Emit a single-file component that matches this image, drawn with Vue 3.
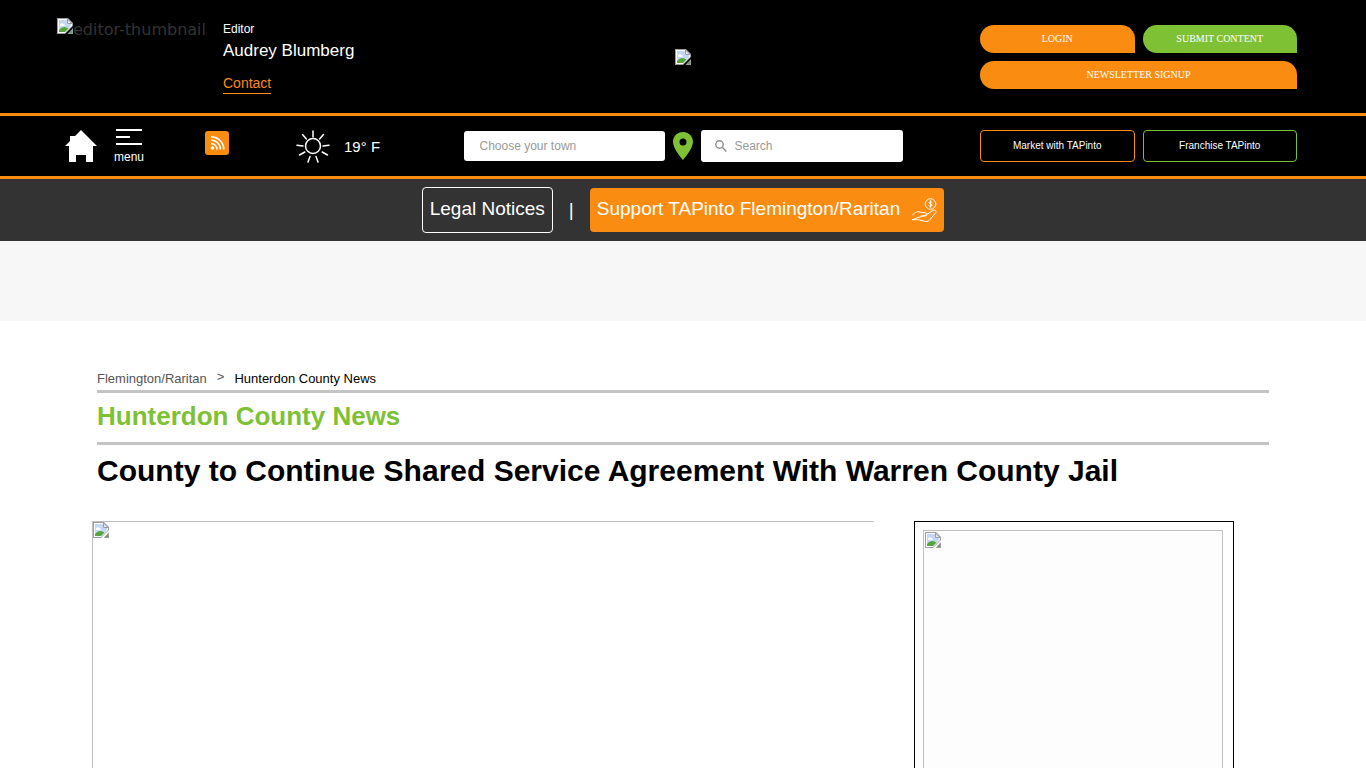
<template>
  <div class="page">
    <header>
      <div class="top-bar">
        <div class="editor">
          <div class="editor-thumb">
            <BrokenImage />
            <span>editor-thumbnail</span>
          </div>
          <div class="editor-info">
            <span class="editor-role">Editor</span>
            <span class="editor-name">Audrey Blumberg</span>
            <a href="#" class="editor-contact">Contact</a>
          </div>
        </div>
        <a href="#" class="logo" aria-label="Home page"><BrokenImage /></a>
        <div class="account-buttons">
          <button type="button" class="pill">LOGIN</button>
          <button type="button" class="pill pill-green">SUBMIT CONTENT</button>
          <button type="button" class="pill pill-wide">NEWSLETTER SIGNUP</button>
        </div>
      </div>

      <nav class="nav-bar">
        <div class="nav-left">
          <a href="#" class="home" aria-label="Home">
            <svg width="32" height="34" viewBox="0 0 32 34" fill="#fff">
              <path d="M16 1L21 6L32 17H28V33H21V26H11V33H4V17H0L5 12V7H10Z" />
            </svg>
          </a>
          <button type="button" class="menu">
            <svg width="26" height="18" viewBox="0 0 26 18" stroke="#fff" stroke-width="2">
              <path d="M0 2H26M0 9H14M0 16H26" />
            </svg>
            <span>menu</span>
          </button>
          <a href="#" class="rss" aria-label="RSS feed">
            <svg width="24" height="24" viewBox="0 0 24 24" fill="none">
              <rect width="24" height="24" rx="3" fill="#fa8c11" />
              <circle cx="7.5" cy="17" r="1.8" fill="#fff" />
              <path d="M6 12.500A6 6 0 0 1 12 18.500M6 9A9.500 9.500 0 0 1 15.500 18.500M6 5.700A12.800 12.800 0 0 1 18.800 18.500" stroke="#fff" stroke-width="1.600" />
            </svg>
          </a>
          <div class="weather">
            <svg width="34" height="34" viewBox="0 0 34 34" fill="none" stroke="#fff" stroke-width="1.500" stroke-linecap="round">
              <circle cx="17" cy="17" r="7.500" />
              <path d="M17 2V8M27.500 5.500L23.600 10M33 16.300L27 17M31.500 26L26.200 23M22 33L20 27.400M12 33L14 27.400M3.500 26L8.800 23M1 16.300L7 17M6.500 5.500L10.400 10" />
            </svg>
            <span>19° F</span>
          </div>
        </div>

        <form class="search" @submit.prevent>
          <input v-model="town" class="town-input" type="text" placeholder="Choose your town" aria-label="Choose your town" />
          <svg class="pin" width="20" height="28" viewBox="0 0 20 28" fill="#7fc135">
            <path fill-rule="evenodd" d="M10 0C4.400 0 0 4.400 0 9.800C0 17 10 28 10 28S20 17 20 9.800C20 4.400 15.600 0 10 0ZM10 6.400A3.500 3.500 0 1 1 10 13.400A3.500 3.500 0 0 1 10 6.400Z" />
          </svg>
          <label class="search-box">
            <svg width="12" height="12" viewBox="0 0 12 12" fill="none" stroke="#8d8d8d" stroke-width="1.400">
              <circle cx="4.500" cy="4.500" r="3.700" />
              <path d="M7.300 7.300L11.400 11.400" />
            </svg>
            <input v-model="query" type="text" placeholder="Search" aria-label="Search" />
          </label>
        </form>

        <div class="nav-right">
          <a href="#" class="outline">Market with TAPinto</a>
          <a href="#" class="outline outline-green">Franchise TAPinto</a>
        </div>
      </nav>

      <div class="link-bar">
        <a href="#" class="legal">Legal Notices</a>
        <span class="divider">|</span>
        <a href="#" class="support">
          <span>Support TAPinto Flemington/Raritan</span>
          <svg width="25" height="25" viewBox="0 0 25 25" fill="none" stroke="#fff" stroke-linecap="round" stroke-linejoin="round">
            <circle cx="18.500" cy="6" r="5.300" />
            <path d="M20.200 4.500C19.700 3.500 17 3.500 16.900 4.700C16.900 6.200 20.200 5.600 20.200 7.300C20.100 8.700 17.200 8.500 16.700 7.600M18.500 2.700V9.300" />
            <path d="M0.500 17C3 14 5.500 13.300 8 14C9.500 14.600 11 14.700 13 14.700C15.500 14.700 15.500 18 13 18H9M14.800 16.500L20.800 12.500C22.800 11.300 25 13 23.500 15L18 21.500C17 22.800 15.500 23.800 13.500 23.500L7.500 22C6 21.700 5.500 21.700 4.500 21.700H0.500Z" />
          </svg>
        </a>
      </div>
    </header>

    <div class="ad-strip"></div>

    <main>
      <nav class="breadcrumb" aria-label="Breadcrumb">
        <a href="#">Flemington/Raritan</a>
        <span class="arrow">&gt;</span>
        <a href="#" class="current">Hunterdon County News</a>
      </nav>
      <h2>Hunterdon County News</h2>
      <h1>County to Continue Shared Service Agreement With Warren County Jail</h1>
      <div class="columns">
        <div class="photo"><BrokenImage /></div>
        <aside class="sidebar">
          <div class="ad"><BrokenImage /></div>
        </aside>
      </div>
    </main>
  </div>
</template>

<script setup>
import { h, ref } from 'vue'

const town = ref('')
const query = ref('')

// Placeholder glyph for pictures that are not available
const BrokenImage = () =>
  h('svg', { width: 16, height: 16, viewBox: '0 0 16 16', 'aria-hidden': 'true' }, [
    h('path', { d: 'M0 0H11L16 5V8L8 16H0Z', fill: '#9b9da3' }),
    h('path', { d: 'M1 1H10.500L15 5.500V8L8 15H1Z', fill: '#fff' }),
    h('path', { d: 'M2 2H10V6H14V8L8 14H2Z', fill: '#c4d7f5' }),
    h('path', { d: 'M3 7C3 5 6 4.500 6.500 6C8 6 8 8 7 8H3Z', fill: '#fff' }),
    h('path', { d: 'M2 14V12C5 8.500 8 8 11.500 10.500L8 14Z', fill: '#55a63a' }),
    h('path', { d: 'M10.500 1V5.500H15Z', fill: '#e9ebf2', stroke: '#9b9da3' }),
    h('path', { d: 'M16 10V16H10.500Z', fill: '#9b9da3' }),
    h('path', { d: 'M15 12.500V15H12.500Z', fill: '#55a63a' })
  ])
</script>

<style>
body {
  margin: 0;
  background: #fff;
}
</style>

<style scoped>
.page {
  font-family: "Liberation Sans", Arial, sans-serif;
  color: #000;
}

a {
  color: inherit;
  text-decoration: none;
}

svg {
  display: block;
  flex: none;
}

button,
input {
  font-family: inherit;
  border: 0;
  padding: 0;
  box-sizing: border-box;
}

button {
  cursor: pointer;
}

.top-bar,
.nav-bar {
  display: grid;
  grid-template-columns: 1fr auto 1fr;
  padding: 0 57px;
  background: #000;
  color: #fff;
  border-bottom: 3px solid #fa8c11;
}

.top-bar {
  height: 113px;
}

.editor {
  display: flex;
  gap: 16px;
  padding-top: 18px;
}

.editor-thumb {
  display: flex;
  width: 150px;
  color: #333;
  font-family: "DejaVu Sans", sans-serif;
  font-size: 16px;
  line-height: 24px;
}

.editor-info {
  display: flex;
  flex-direction: column;
  align-items: flex-start;
}

.editor-role {
  font-size: 12px;
  line-height: 22px;
}

.editor-name {
  font-size: 17px;
  line-height: 22px;
}

.editor-contact {
  margin-top: 12px;
  color: #fa8c11;
  font-size: 14px;
  line-height: 19px;
  border-bottom: 1px solid #fa8c11;
}

.logo {
  align-self: center;
}

.account-buttons,
.nav-right {
  justify-self: end;
  display: grid;
  grid-template-columns: 1fr 1fr;
  gap: 8px;
  width: 317px;
  margin-right: 12px;
  align-content: center;
}

.pill {
  height: 28px;
  color: #fff;
  background: #fa8c11;
  font-family: "Liberation Serif", serif;
  font-size: 10px;
  border-radius: 14px 14px 0 14px;
}

.pill-green {
  background: #7fc135;
}

.pill-wide {
  grid-column: span 2;
}

.nav-bar {
  height: 60px;
  align-items: center;
}

.nav-left {
  display: flex;
  align-items: center;
  padding-left: 8px;
}

.menu {
  display: flex;
  flex-direction: column;
  align-items: center;
  gap: 4px;
  margin-left: 17px;
  background: none;
  color: #fff;
  font-size: 12px;
  line-height: 14px;
}

.rss {
  margin: 0 67px 6px 61px;
}

.weather {
  display: flex;
  align-items: center;
  gap: 14px;
  font-size: 15px;
}

.search {
  display: flex;
  align-items: center;
  gap: 8px;
}

.search input {
  color: #333;
  font-size: 12px;
  background: #fff;
}

.search input::placeholder {
  color: #999;
  opacity: 1;
}

.town-input {
  width: 201px;
  height: 30px;
  padding-left: 16px;
  border-radius: 3px;
}

.search-box {
  display: flex;
  align-items: center;
  gap: 8px;
  box-sizing: border-box;
  width: 202px;
  height: 32px;
  padding: 0 14px;
  background: #fff;
  border-radius: 3px;
}

.search-box input {
  flex: 1;
  min-width: 0;
}

.outline {
  padding: 0 8px;
  border: 1px solid #fa8c11;
  border-radius: 4px;
  font-size: 10px;
  line-height: 30px;
  text-align: center;
}

.outline-green {
  border-color: #7fc135;
}

.link-bar {
  display: flex;
  justify-content: center;
  align-items: center;
  height: 62px;
  background: #333;
  color: #fff;
  font-size: 19px;
}

.legal {
  padding: 0 7px 2px;
  border: 1px solid #fff;
  border-radius: 4px;
  line-height: 42px;
}

.divider {
  margin: 0 16px;
}

.support {
  display: flex;
  align-items: center;
  gap: 12px;
  padding: 0 7px;
  background: #fa8c11;
  border-radius: 4px;
}

.support span {
  padding-bottom: 2px;
  line-height: 42px;
}

.ad-strip {
  height: 80px;
  background: #f7f7f7;
}

main {
  padding: 49px 97px 0;
}

.breadcrumb {
  display: flex;
  gap: 10px;
  font-size: 13px;
  line-height: 17px;
  padding-bottom: 3px;
  color: #555;
  border-bottom: 3px solid #c4c4c4;
}

.arrow {
  line-height: 14px;
}

.current {
  color: #000;
}

h2 {
  margin: 0;
  padding-bottom: 3px;
  color: #7fc135;
  font-size: 26px;
  line-height: 46px;
  border-bottom: 3px solid #c4c4c4;
}

h1 {
  margin: 0;
  font-size: 30px;
  line-height: 52px;
}

.columns {
  display: flex;
  gap: 40px;
  margin: 24px 35px 0 -5px;
}

.photo {
  flex: 1;
  height: 520px;
  border: 1px solid #c0c0c0;
  border-right: 0;
}

.sidebar {
  box-sizing: border-box;
  width: 320px;
  padding: 8px;
  border: 1px solid #000;
}

.ad {
  box-sizing: border-box;
  width: 300px;
  height: 600px;
  padding: 1px;
  background: #fdfdfd;
  border: 1px solid #c0c0c0;
}
</style>
